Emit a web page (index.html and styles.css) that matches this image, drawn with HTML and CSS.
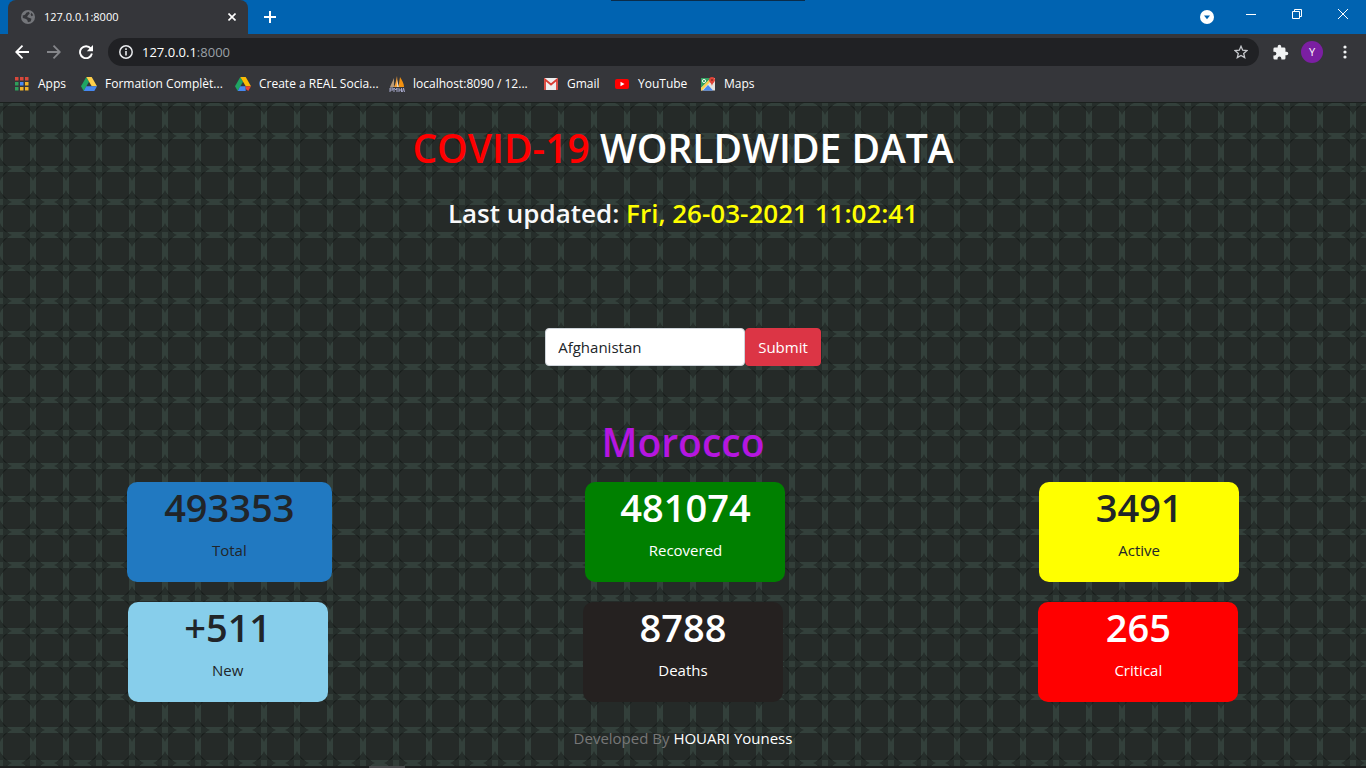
FILE: index.html
```html
<!DOCTYPE html>
<html lang="en">
<head>
<meta charset="utf-8">
<title>127.0.0.1:8000</title>
<link rel="stylesheet" href="styles.css">
</head>
<body>
<header class="browser">
  <div class="tabstrip">
    <div class="tab">
      <svg class="globe" viewBox="0 0 16 16" width="14" height="14" aria-hidden="true"><circle cx="8" cy="8" r="8" fill="#74767a"/><path d="M2 6c2 0 3-1 4-3l3-1 1 2-2 2-1 2 3 1 2 1-1 3-3 1-1-3-2-1-3-1zM12 3l2 3-2 1-1-2z" fill="#35363a"/></svg>
      <span class="tab-title">127.0.0.1:8000</span>
      <button class="icon-btn tab-close" type="button" aria-label="Close tab"><svg viewBox="0 0 8 8" width="8" height="8"><path d="M.5.5l7 7M7.5.5l-7 7" stroke="#fff" stroke-width="1.6"/></svg></button>
    </div>
    <button class="icon-btn new-tab" type="button" aria-label="New tab"><svg viewBox="0 0 12 12" width="12" height="12"><path d="M6 0v12M0 6h12" stroke="#fff" stroke-width="2"/></svg></button>
    <div class="drag-edge"></div>
    <div class="window-controls">
      <button class="icon-btn search-tabs" type="button" aria-label="Search tabs"><svg viewBox="0 0 14 14" width="14" height="14"><circle cx="7" cy="7" r="7" fill="#fff"/><path d="M4 5.4h6L7 9.2z" fill="#0063b1"/></svg></button>
      <button class="icon-btn" type="button" aria-label="Minimize"><svg viewBox="0 0 10 10" width="10" height="10"><path d="M0 5.5h10" stroke="#fff"/></svg></button>
      <button class="icon-btn" type="button" aria-label="Restore"><svg viewBox="0 0 10 10" width="10" height="10"><path d="M.5 2.5h7v7h-7zM2.500 2.500v-2h7v7h-2" fill="none" stroke="#fff"/></svg></button>
      <button class="icon-btn" type="button" aria-label="Close"><svg viewBox="0 0 10 10" width="10" height="10"><path d="M0 0l10 10M10 0L0 10" stroke="#fff"/></svg></button>
    </div>
  </div>
  <div class="toolbar">
    <button class="icon-btn" type="button" aria-label="Back"><svg viewBox="0 0 14 14" width="14" height="14"><path d="M14 7H1.500M7.500.7L1.200 7l6.300 6.300" fill="none" stroke="#fff" stroke-width="1.800"/></svg></button>
    <button class="icon-btn" type="button" aria-label="Forward"><svg viewBox="0 0 14 14" width="14" height="14"><path d="M0 7h12.500M6.500.7L12.800 7l-6.300 6.300" fill="none" stroke="#85868a" stroke-width="1.800"/></svg></button>
    <button class="icon-btn" type="button" aria-label="Reload"><svg viewBox="0 0 14 14" width="14" height="14"><path d="M11.800 3.600A6 6 0 1 0 12.900 8.500" fill="none" stroke="#fff" stroke-width="1.900"/><path d="M14 0v6.200H7.800z" fill="#fff"/></svg></button>
    <div class="omnibox">
      <svg viewBox="0 0 14 14" width="14" height="14" aria-hidden="true"><circle cx="7" cy="7" r="6.200" fill="none" stroke="#e8eaed" stroke-width="1.500"/><path d="M7 6v4.500M7 3.300v1.600" stroke="#e8eaed" stroke-width="1.600"/></svg>
      <span class="url">127.0.0.1<span class="port">:8000</span></span>
      <button class="icon-btn star" type="button" aria-label="Bookmark this page"><svg viewBox="0 0 14 14" width="14" height="14"><path d="M7 1.300l1.700 3.900 4.200.4-3.200 2.800 1 4.200L7 10.400l-3.700 2.200 1-4.200L1.100 5.600l4.200-.4z" fill="none" stroke="#c6c8cc" stroke-width="1.300"/></svg></button>
    </div>
    <button class="icon-btn extensions" type="button" aria-label="Extensions"><svg viewBox="0 0 24 24" width="17" height="17"><path d="M20.500 11H19V7a2 2 0 0 0-2-2h-4V3.500a2.500 2.500 0 0 0-5 0V5H4a2 2 0 0 0-2 2v3.800h1.500a2.700 2.700 0 0 1 0 5.400H2V20a2 2 0 0 0 2 2h3.800v-1.500a2.700 2.700 0 0 1 5.400 0V22H17a2 2 0 0 0 2-2v-4h1.500a2.500 2.500 0 0 0 0-5z" fill="#f1f3f4"/></svg></button>
    <button class="avatar" type="button">Y</button>
    <button class="icon-btn menu" type="button" aria-label="Menu"><svg viewBox="0 0 4 14" width="4" height="14"><g fill="#f1f3f4"><circle cx="2" cy="2" r="1.600"/><circle cx="2" cy="7" r="1.600"/><circle cx="2" cy="12" r="1.600"/></g></svg></button>
  </div>
  <nav class="bookmarks" aria-label="Bookmarks">
    <a class="bm bm-apps" href="#"><svg viewBox="0 0 14 14" width="14" height="14"><path d="M0 0h3.500v3.500H0zM5 0h3.500v3.500H5zM10 0h3.500v3.500H10z" fill="#d9483b"/><path d="M0 5h3.500v3.500H0z" fill="#2f9e5b"/><path d="M5 5h3.500v3.500H5z" fill="#4a8af4"/><path d="M10 5h3.500v3.500H10z" fill="#f2b32a"/><path d="M0 10h3.500v3.500H0z" fill="#2f9e5b"/><path d="M5 10h3.500v3.500H5zM10 10h3.500v3.500H10z" fill="#f2b32a"/></svg><span>Apps</span></a>
    <a class="bm bm-drive" href="#"><svg viewBox="0 0 16 14" width="16" height="14"><path d="M5.300 0L8 4.700 2.700 14 0 9.300z" fill="#1fa463"/><path d="M5.300 0h5.400L16 9.300h-5.300z" fill="#ffd04b"/><path d="M5.300 9.300H16L13.300 14H2.700z" fill="#4688f1"/></svg><span>Formation Complèt...</span></a>
    <a class="bm bm-create" href="#"><svg viewBox="0 0 16 14" width="16" height="14"><path d="M5.300 0L8 4.700 2.700 14 0 9.300z" fill="#1fa463"/><path d="M5.300 0h5.400L16 9.300h-5.300z" fill="#fbbc04"/><path d="M5.300 9.300h5.400v4.700h-8z" fill="#4688f1"/><path d="M10.700 9.300H16L13.300 14l-2.600-2z" fill="#ea4335"/></svg><span>Create a REAL Socia...</span></a>
    <a class="bm bm-local" href="#"><svg viewBox="0 0 16 16" width="16" height="16"><path d="M5 2L1 11h4z" fill="#b99a78"/><path d="M8 0c-1 4-1 7-3 11h4z" fill="#f6a13a"/><path d="M11 1c2 3 4 7 4 10H9.500z" fill="#f29111"/><path d="M8 4v7h2z" fill="#e9d6bd"/><path d="M1 16v-4h3v2H1m4 2v-4l2 2 1-2v4m2 0v-4m0 2h2.500m0-2v4m1 0l1-4 1 4" fill="none" stroke="#a5a6c8" stroke-width="1"/></svg><span>localhost:8090 / 12...</span></a>
    <a class="bm bm-gmail" href="#"><svg viewBox="0 0 14 12" width="14" height="12"><rect width="14" height="12" rx="1" fill="#eee"/><path d="M1 12V1.500l6 5 6-5V12" fill="none" stroke="#d93f35" stroke-width="1.800"/></svg><span>Gmail</span></a>
    <a class="bm bm-youtube" href="#"><svg viewBox="0 0 14 12" width="14" height="12"><rect y="1" width="14" height="10" rx="2" fill="#f00"/><path d="M5.500 3.700v4.600l4-2.300z" fill="#fff"/></svg><span>YouTube</span></a>
    <a class="bm bm-maps" href="#"><svg viewBox="0 0 14 14" width="14" height="14"><path d="M0 1h14v12.500H0z" fill="#e4e4e0"/><path d="M0 1h10L0 11z" fill="#34a060"/><path d="M2 13.500L7 8l5 5.500z" fill="#4688f1"/><path d="M0 11l9-9 1.500 1.500L.8 13.500H0z" fill="#fbd04c"/><circle cx="3" cy="4" r="1.600" fill="none" stroke="#fff" stroke-width=".9"/><path d="M8 3a3 3 0 0 1 6 0c0 2-2.500 3-3 6-.5-3-3-4-3-6z" fill="#e04438"/><circle cx="11" cy="3" r="1" fill="#8b2c22"/></svg><span>Maps</span></a>
  </nav>
</header>
<main class="page">
  <h1 class="title"><span class="red">COVID-19</span> WORLDWIDE DATA</h1>
  <h2 class="updated">Last updated: <span class="date">Fri, 26-03-2021 11:02:41</span></h2>
  <form class="search">
    <select class="country" aria-label="Country"><option>Afghanistan</option></select>
    <button class="submit" type="button">Submit</button>
  </form>
  <h2 class="place">Morocco</h2>
  <section class="cards">
    <div class="card total"><p class="num">493353</p><p class="label">Total</p></div>
    <div class="card recovered"><p class="num">481074</p><p class="label">Recovered</p></div>
    <div class="card active"><p class="num">3491</p><p class="label">Active</p></div>
  </section>
  <section class="cards">
    <div class="card new"><p class="num">+511</p><p class="label">New</p></div>
    <div class="card deaths"><p class="num">8788</p><p class="label">Deaths</p></div>
    <div class="card critical"><p class="num">265</p><p class="label">Critical</p></div>
  </section>
  <footer class="credit">Developed By <span class="author">HOUARI Youness</span></footer>
</main>
<div class="taskbar-edge"></div>
</body>
</html>
```
FILE: styles.css
```css
* { box-sizing: border-box; }
body {
  margin: 0;
  min-height: 100vh;
  display: flex;
  flex-direction: column;
  font-family: "Open Sans", "Noto Sans", sans-serif;
  font-size: 15px;
  line-height: 24px;
  background: #252a28;
}
h1, h2, p { margin: 0; }
button { font-family: inherit; cursor: pointer; }
svg { display: block; flex: none; }

/* Browser frame */
.browser { background: #35363a; color: #fff; font-size: 12px; line-height: 16px; }
.tabstrip { display: flex; height: 34px; background: #0063b1; padding-left: 8px; }
.tab {
  display: flex; align-items: center; gap: 9px;
  width: 240px; padding: 0 12px 0 13px;
  background: #35363a; border-radius: 8px 8px 0 0;
}
.tab-title { flex: 1; font-size: 11px; }
.icon-btn {
  display: flex; align-items: center; justify-content: center;
  padding: 0; border: 0; background: none;
}
.new-tab { width: 44px; }
.drag-edge { flex: 1; background: linear-gradient(#0a2c4a, #0a2c4a) 319px 0 / 194px 1px no-repeat; }
.window-controls { display: flex; align-items: flex-start; }
.window-controls .icon-btn { width: 46px; height: 28px; }
.window-controls .search-tabs { width: 42px; height: 34px; }
.toolbar { display: flex; align-items: center; height: 36px; padding: 0 12px 0 15px; gap: 18px; }
.omnibox {
  display: flex; align-items: center; flex: 1; gap: 9px;
  height: 28px; margin-left: -3px; padding: 0 11px;
  border-radius: 14px; background: #202124;
}
.url { flex: 1; font-size: 13px; }
.port { color: #9aa0a6; }
.extensions { margin-left: -5px; }
.avatar {
  width: 22px; height: 22px; margin-left: -6px; padding: 0;
  border: 0; border-radius: 50%;
  background: #7b1fa2; color: #fff; font-size: 11px; line-height: 22px;
}
.menu { width: 18px; margin-left: -5px; }
.bookmarks { display: flex; align-items: center; height: 32px; padding: 0 0 4px 15px; }
.bm { display: flex; align-items: center; gap: 8px; color: #fff; text-decoration: none; white-space: nowrap; }
.bm-apps { width: 66px; gap: 9px; }
.bm-drive { width: 154px; }
.bm-create { width: 154px; }
.bm-local { width: 155px; }
.bm-gmail { width: 71px; gap: 9px; }
.bm-youtube { width: 86px; gap: 9px; }
.bm-maps { gap: 9px; }

/* Dashboard */
.page {
  flex: 1;
  padding-top: 21px;
  text-align: center;
  color: #fff;
  border-top: 1px solid #1b201e;
  background-color: #252a28;
  background-image: url("data:image/svg+xml,%3Csvg xmlns='http://www.w3.org/2000/svg' width='33' height='33'%3E%3Cpath d='M0 0H33V33H0z' fill='%23252a28'/%3E%3Cpath d='M0 13h33v6H0zM13 0h6v33h-6z' fill='%2333403b'/%3E%3Cpath d='M16 6L26 16 16 26 6 16z' fill='%23171c1a'/%3E%3Cpath d='M16 4L20 12 28 16 20 20 16 28 12 20 4 16 12 12z' fill='%23262e2b'/%3E%3Cpath d='M13 13h6v6h-6z' fill='%23323e39'/%3E%3C/svg%3E");
  background-position: -16px -16px;
}
.title { font-size: 39px; line-height: 48px; font-weight: 600; }
.red { color: #f00; }
.updated { margin-top: 24px; font-size: 26px; line-height: 34px; font-weight: 600; color: #f8f9fa; }
.date { color: #ff0; }
.search { display: flex; justify-content: center; margin-top: 98px; }
.country {
  appearance: none; width: 200px; height: 38px; padding: 0 12px;
  border: 1px solid #ced4da; border-radius: 4px;
  background: #fff; color: #212529; font: inherit;
}
.submit {
  height: 38px; padding: 0 12px; border: 1px solid #dc3545; border-radius: 4px;
  background: #dc3545; color: #fff; font-size: 15px;
}
.place { margin-top: 52px; font-size: 39px; line-height: 48px; font-weight: 600; color: #b516e0; }
.cards { display: flex; justify-content: space-around; margin-top: 16px; }
.cards + .cards { margin-top: 20px; }
.card { min-width: 200px; height: 100px; padding: 1px 34px 0; border-radius: 10px; }
.num { font-size: 38px; line-height: 48px; font-weight: 600; }
.label { margin-top: 7px; }
.total { min-width: 205px; background: #2179c1; color: #212529; }
.recovered { background: green; }
.active { background: #ff0; color: #212529; }
.new { background: skyblue; color: #212529; }
.deaths { background: #252120; }
.critical { background: #f00; }
.credit { margin-top: 24px; color: #777; }
.author { color: #fff; }
.taskbar-edge {
  height: 2px;
  background: linear-gradient(#4a4a4c, #4a4a4c) 369px 0 / 36px 2px no-repeat #1c1e1e;
}
```
